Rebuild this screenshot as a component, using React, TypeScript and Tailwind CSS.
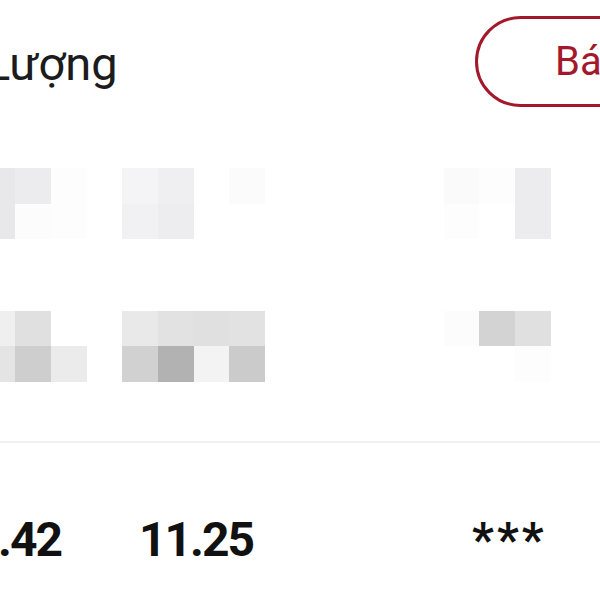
import React from 'react';

// pixelated (censored) area, 17 columns x 6 rows of ~36px cells
const W = 'bg-white';
const mosaic: string[][] = [
  ['bg-[#e8e8ea]', 'bg-[#ececee]', 'bg-[#fdfdfd]', W, 'bg-[#f4f4f6]', 'bg-[#efeff1]', W, 'bg-[#fbfbfb]', W, W, W, W, W, 'bg-[#fafafa]', 'bg-[#fdfdfd]', 'bg-[#ececee]', W],
  ['bg-[#e8e8ea]', 'bg-[#fcfcfc]', 'bg-[#fdfdfd]', W, 'bg-[#f1f1f3]', 'bg-[#ededef]', W, W, W, W, W, W, W, 'bg-[#fdfdfd]', W, 'bg-[#ececee]', W],
  [W, W, W, W, W, W, W, W, W, W, W, W, W, W, W, W, W],
  [W, W, W, W, W, W, W, W, W, W, W, W, W, W, W, W, W],
  ['bg-[#efefef]', 'bg-[#e0e0e0]', W, W, 'bg-[#e9e9e9]', 'bg-[#e2e2e2]', 'bg-[#e0e0e0]', 'bg-[#e2e2e2]', W, W, W, W, W, 'bg-[#fcfcfc]', 'bg-[#d3d3d3]', 'bg-[#e0e0e0]', W],
  ['bg-[#e4e4e4]', 'bg-[#cecece]', 'bg-[#ebebeb]', W, 'bg-[#d1d1d1]', 'bg-[#b2b2b2]', 'bg-[#f3f3f3]', 'bg-[#cbcbcb]', W, W, W, W, W, W, W, 'bg-[#fdfdfd]', W],
];

export default function App() {
  return (
    <div className="w-[600px] h-[600px] overflow-hidden bg-white font-['Roboto',sans-serif]">
      <div className="flex items-center justify-between pt-[16px]">
        <span className="-ml-[15px] mt-[4px] text-[47px] leading-none text-[#1c1c1c]">Lượng</span>
        <div className="-mr-[75px] w-[200px] h-[91px] rounded-full border-[3px] border-[#a3192b] flex items-center pl-[77px] text-[40px] leading-none text-[#a3192b]">
          Bán
        </div>
      </div>

      <div className="mt-[61px] -ml-[20.4px] grid grid-cols-[repeat(17,35.7px)] grid-rows-[repeat(6,35.7px)]">
        {mosaic.flatMap((row, r) =>
          row.map((c, i) => <div key={r + '-' + i} className={c} />)
        )}
      </div>

      <div className="mt-[59px] h-[2px] bg-[#f0f0f0]" />

      <div className="mt-[73px] flex items-start text-[48px] font-bold leading-none text-[#111111]">
        <span className="-ml-[2px] tracking-[-2px]">.42</span>
        <span className="ml-[78px] tracking-[-2px]">11.25</span>
        <span className="ml-[219px] tracking-[3px]">***</span>
      </div>
    </div>
  );
}
